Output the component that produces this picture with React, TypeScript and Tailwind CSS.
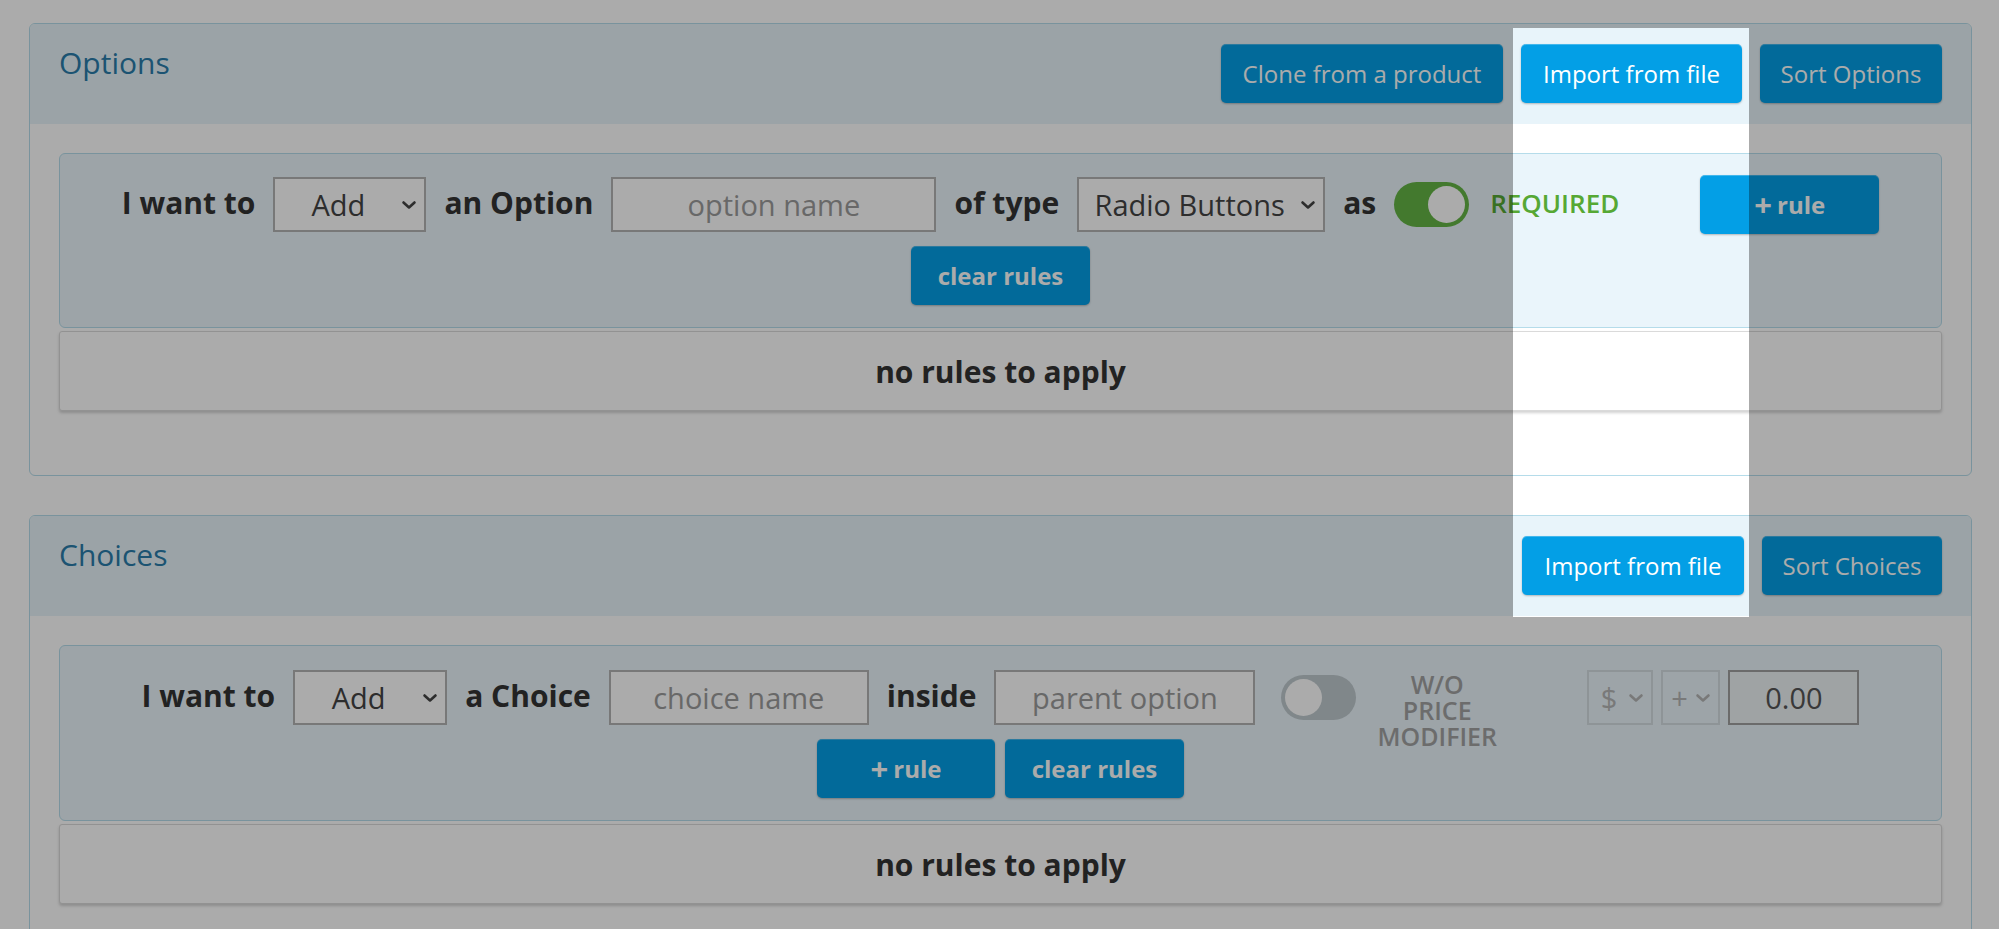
import React from 'react';

type Kids = { children?: React.ReactNode; className?: string };

const Chevron = ({ className = '' }: { className?: string }) => (
  <svg viewBox="0 0 16 10" className={className} fill="none">
    <path d="M2.5 2.5l5.5 5 5.5-5" stroke="currentColor" strokeWidth="2.6" strokeLinecap="round" strokeLinejoin="round" />
  </svg>
);

const FakeSelect = ({ value, className = '', muted = false }: { value: string; className?: string; muted?: boolean }) => (
  <div
    className={`flex h-[55px] shrink-0 items-center border-2 ${
      muted ? 'border-[#d4dde1] text-[#b5b5b5]' : 'border-[#b4b4b4] bg-white text-[#444]'
    } ${className}`}
  >
    <span className="flex-1 text-center text-[29px] leading-none whitespace-nowrap">{value}</span>
    <Chevron className="mr-[7px] h-[10px] w-[16px] shrink-0" />
  </div>
);

const TextBox = ({ placeholder, className = '' }: { placeholder: string; className?: string }) => (
  <input
    readOnly
    placeholder={placeholder}
    className={`h-[55px] shrink-0 border-2 border-[#b4b4b4] bg-white text-center text-[29px] text-[#444] outline-none placeholder:text-[#9c9c9c] ${className}`}
  />
);

const Toggle = ({ on }: { on: boolean }) => (
  <div
    className={`flex h-[45px] w-[75px] shrink-0 items-center rounded-full p-[4px] ${
      on ? 'justify-end bg-[#64b545]' : 'justify-start bg-[#bfc9ce]'
    }`}
  >
    <div className="h-[37px] w-[37px] rounded-full bg-white" />
  </div>
);

const Label = ({ children }: Kids) => (
  <span className="relative -top-[2px] text-[30px] font-bold leading-none whitespace-nowrap text-[#333]">{children}</span>
);

const Btn = ({ children, className = '' }: Kids) => (
  <button
    className={`flex h-[59px] shrink-0 items-center justify-center rounded-[5px] bg-[#039fe6] text-white shadow-[inset_0_1px_0_rgba(255,255,255,0.25),0_1px_2px_rgba(0,0,0,0.25)] ${className}`}
  >
    {children}
  </button>
);

const RuleBtn = ({ className = '' }: { className?: string }) => (
  <Btn className={`text-[24px] font-bold ${className}`}>
    <span className="mr-[5px] text-[31px] leading-none">+</span>
    <span>rule</span>
  </Btn>
);

const PanelHeader = ({ title, children }: { title: string; children: React.ReactNode }) => (
  <div className="flex items-start justify-between bg-[#e8f4fa] px-[29px] pt-[20px] pb-[21px]">
    <h2 className="mt-px text-[30px] leading-[36px] text-[#2a7dab]">{title}</h2>
    <div className="flex gap-[18px] text-[24px]">{children}</div>
  </div>
);

const NoRules = () => (
  <div className="mt-[3px] flex h-[80px] items-center justify-center rounded-[3px] border border-[#dadada] bg-white shadow-[0_2px_3px_rgba(0,0,0,0.18)]">
    <span className="text-[30px] font-bold text-[#333]">no rules to apply</span>
  </div>
);

export default function App() {
  return (
    <div className="relative h-screen overflow-hidden bg-white font-['Open_Sans',sans-serif]">
      {/* Options */}
      <section className="mt-[23px] ml-[29px] mr-[27px] overflow-hidden rounded-[6px] border border-[#b5dcea] bg-white">
        <PanelHeader title="Options">
          <Btn className="w-[282px]">Clone from a product</Btn>
          <Btn className="w-[221px]">Import from file</Btn>
          <Btn className="w-[182px]">Sort Options</Btn>
        </PanelHeader>
        <div className="px-[29px] pt-[29px] pb-[64px]">
          <div className="rounded-[6px] border border-[#b5dcea] bg-[#eaf5fb] pt-[21px] pb-[22px]">
            <div className="flex items-center justify-center gap-[18px]">
              <Label>I want to</Label>
              <FakeSelect value="Add" className="w-[153px]" />
              <Label>an Option</Label>
              <TextBox placeholder="option name" className="w-[325px]" />
              <Label>of type</Label>
              <FakeSelect value="Radio Buttons" className="w-[248px]" />
              <Label>as</Label>
              <Toggle on />
              <div className="ml-[3px] w-[190px]">
                <span className="text-[26px] font-semibold leading-none text-[#56a834]">REQUIRED</span>
              </div>
              <RuleBtn className="ml-[2px] w-[179px]" />
            </div>
            <div className="mt-[12px] flex justify-center">
              <Btn className="w-[179px] text-[24px] font-bold">clear rules</Btn>
            </div>
          </div>
          <NoRules />
        </div>
      </section>

      {/* Choices */}
      <section className="mt-[39px] ml-[29px] mr-[27px] overflow-hidden rounded-[6px] border border-[#b5dcea] bg-white">
        <PanelHeader title="Choices">
          <Btn className="w-[222px]">Import from file</Btn>
          <Btn className="w-[180px]">Sort Choices</Btn>
        </PanelHeader>
        <div className="px-[29px] pt-[29px] pb-[64px]">
          <div className="rounded-[6px] border border-[#b5dcea] bg-[#eaf5fb] pt-[24px] pb-[22px]">
            <div className="flex items-center justify-center gap-[18px]">
              <Label>I want to</Label>
              <FakeSelect value="Add" className="w-[154px]" />
              <Label>a Choice</Label>
              <TextBox placeholder="choice name" className="w-[260px]" />
              <Label>inside</Label>
              <TextBox placeholder="parent option" className="w-[261px]" />
              <div className="ml-[8px]">
                <Toggle on={false} />
              </div>
              <div className="ml-[3px] h-[55px] w-[190px] self-start">
                <div className="inline-block pt-[1px] text-center text-[25px] font-semibold leading-[26px] text-[#a2a2a2]">
                  <div>W/O</div>
                  <div>PRICE</div>
                  <div>MODIFIER</div>
                </div>
              </div>
              <div className="ml-[2px] flex gap-[8px]">
                <FakeSelect value="$" muted className="w-[66px]" />
                <FakeSelect value="+" muted className="w-[59px]" />
                <div className="flex h-[55px] w-[131px] items-center justify-center border-2 border-[#a0a0a0] bg-[#eef3f5] text-[29px] text-[#555]">
                  0.00
                </div>
              </div>
            </div>
            <div className="mt-[14px] flex justify-center gap-[10px]">
              <RuleBtn className="w-[178px]" />
              <Btn className="w-[179px] text-[24px] font-bold">clear rules</Btn>
            </div>
          </div>
          <NoRules />
        </div>
      </section>

      {/* tour spotlight */}
      <div className="pointer-events-none absolute top-[28px] left-[1513px] h-[589px] w-[236px] shadow-[0_0_0_4000px_rgba(0,0,0,0.33)]" />
    </div>
  );
}
